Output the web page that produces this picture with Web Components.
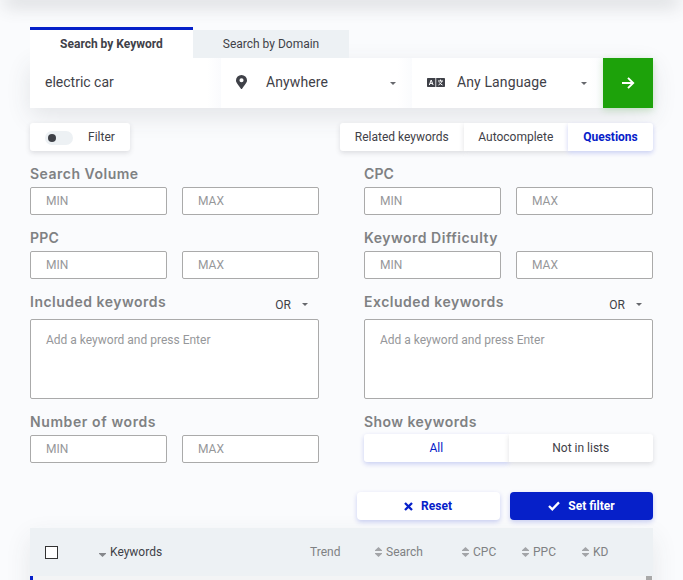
<!DOCTYPE html>
<html lang="en">
<head>
<meta charset="utf-8">
<title>Keyword search</title>
<style>
  :root {
    --blue: #0620c9;
    --green: #1da20a;
    --text: #3f4148;
    --muted: #7f8183;
    --placeholder: #96979a;
    --line: #aaa;
    --panel: #edf1f4;
    --page: #fafbfd;
    --label-font: Inter, "Open Sans", sans-serif;
    --soft-shadow: 0 2px 5px rgba(60, 64, 72, 0.16);
    --blue-shadow: 0 2px 5px rgba(6, 32, 201, 0.2);
  }
  html, body {
    margin: 0;
    height: 580px;
    overflow: hidden;
    background: var(--page);
  }
  body {
    font: 12px/14px Roboto, "Liberation Sans", sans-serif;
    color: var(--text);
  }
</style>
</head>
<body>
<keyword-page></keyword-page>

<script>
"use strict";

const ICONS = {
  pin: `<svg width="11" height="14" viewBox="0 0 384 512" preserveAspectRatio="none"><path fill="currentColor" d="M172 502C27 291 0 270 0 192a192 192 0 0 1 384 0c0 78-27 99-172 310a24 24 0 0 1-40 0zM192 264a72 72 0 1 0 0-144 72 72 0 0 0 0 144z"/></svg>`,
  language: `<svg width="18" height="9" viewBox="0 0 18 9"><path fill="currentColor" d="M.8 0h7.6v9H.8a.8.8 0 0 1-.8-.8V.8A.8.8 0 0 1 .8 0zM9.2 0h8a.8.8 0 0 1 .8.8v7.4a.8.8 0 0 1-.8.8h-8z"/><path d="M2.3 7 4.2 2l1.9 5M3 5.4h2.4M11 3h5M13.5 1.6V3M14.8 3.2c-.4 1.7-1.6 2.9-3.3 3.8M12.2 4.4c.7 1.2 1.9 2 3.3 2.6" fill="none" stroke="#fff" stroke-width="1"/></svg>`,
  arrow: `<svg width="14" height="14" viewBox="0 0 14 14"><path d="M1 7h11M7 1.8 12.2 7 7 12.2" fill="none" stroke="currentColor" stroke-width="1.9"/></svg>`,
  caret: `<svg width="6" height="3" viewBox="0 0 6 3"><path fill="currentColor" d="M0 0h6L3 3z"/></svg>`,
  cross: `<svg width="9" height="9" viewBox="0 0 9 9"><path d="m1 1 7 7M8 1 1 8" stroke="currentColor" stroke-width="2.3"/></svg>`,
  check: `<svg width="12" height="10" viewBox="0 0 12 10"><path d="m1 5 3.3 3.3L11 1.4" fill="none" stroke="currentColor" stroke-width="2.3"/></svg>`,
  sort: `<svg width="7" height="10" viewBox="0 0 7 10"><path fill="currentColor" d="M3.5 0 7 3.2V4H0v-.8zM0 6h7v.8L3.5 10 0 6.8z"/></svg>`,
  down: `<svg width="7" height="10" viewBox="0 0 7 10"><path fill="currentColor" d="M0 6h7v.8L3.5 10 0 6.8z"/></svg>`,
};

class BaseElement extends HTMLElement {
  render(css, html) {
    if (this.shadowRoot) return;
    const shadow = this.attachShadow({ mode: "open" });
    shadow.innerHTML = `<style>* { box-sizing: border-box; }${css}</style>${html}`;
  }
}

class UiIcon extends BaseElement {
  connectedCallback() {
    this.render(
      `:host { display: inline-flex; flex: none; } svg { display: block; }`,
      ICONS[this.getAttribute("name")]
    );
  }
}

class SearchTabs extends BaseElement {
  connectedCallback() {
    this.render(
      `
      :host { display: flex; align-items: flex-end; height: 31px; }
      button {
        height: 28px; border: 0; padding: 0; font: inherit; color: inherit;
        background: var(--panel); width: 156px;
      }
      button.active {
        width: 163px; height: 31px; font-weight: bold; background: #fff;
        border-top: 3px solid var(--blue);
      }
      `,
      `
      <button type="button" class="active">Search by Keyword</button>
      <button type="button">Search by Domain</button>
      `
    );
  }
}

class SearchCell extends BaseElement {
  connectedCallback() {
    const icon = this.getAttribute("icon");
    this.render(
      `
      :host {
        display: flex; align-items: center; height: 50px; padding: 0 16px 2px 15px;
        font-size: 14px; line-height: 20px; box-sizing: border-box;
        background: linear-gradient(90deg, #fff calc(100% - 14px), var(--page));
      }
      .icon { display: flex; width: var(--icon-width, 30px); }
      .value { flex: 1; }
      :host([icon]) .value { letter-spacing: 0.12px; }
      .caret { color: #66686d; margin-top: 3px; }
      `,
      `
      ${icon ? `<span class="icon"><ui-icon name="${icon}"></ui-icon></span>` : ""}
      <span class="value"><slot></slot></span>
      ${icon ? `<ui-icon class="caret" name="caret"></ui-icon>` : ""}
      `
    );
  }
}

class SearchBar extends BaseElement {
  connectedCallback() {
    this.render(
      `
      :host {
        display: grid; grid-template-columns: 191px 191px 191px 50px; height: 50px;
        box-shadow: 0 8px 24px rgba(60, 64, 72, 0.12);
      }
      button {
        display: flex; align-items: center; justify-content: center; border: 0;
        color: #fff; background: var(--green); box-shadow: 0 2px 7px rgba(29, 162, 10, 0.2);
      }
      `,
      `
      <search-cell>electric car</search-cell>
      <search-cell icon="pin">Anywhere</search-cell>
      <search-cell icon="language">Any Language</search-cell>
      <button type="button" aria-label="Search"><ui-icon name="arrow"></ui-icon></button>
      `
    );
  }
}

class FilterSwitch extends BaseElement {
  connectedCallback() {
    this.render(
      `
      :host {
        display: flex; align-items: center; gap: 15px; width: 100px; height: 28px;
        padding-left: 15px; box-sizing: border-box; background: #fff; border-radius: 3px;
        box-shadow: var(--soft-shadow);
      }
      .track {
        width: 28px; height: 14px; margin-top: 2px; padding: 3px; border-radius: 7px;
        background: var(--panel);
      }
      .knob { width: 8px; height: 8px; border-radius: 50%; background: var(--text); }
      `,
      `<div class="track"><div class="knob"></div></div><slot></slot>`
    );
  }
}

class SegmentGroup extends BaseElement {
  connectedCallback() {
    this.render(
      `
      :host { display: grid; grid-template-columns: var(--columns); height: 28px; }
      ::slotted(*) {
        display: flex; align-items: center; justify-content: center;
        background: #fff; box-shadow: var(--soft-shadow);
      }
      ::slotted(:first-child) { border-radius: 3px 0 0 3px; }
      ::slotted(:last-child) { border-radius: 0 3px 3px 0; }
      ::slotted(.active) { color: var(--blue); box-shadow: var(--blue-shadow); }
      `,
      `<slot></slot>`
    );
  }
}

class FilterField extends BaseElement {
  connectedCallback() {
    const spacing = this.getAttribute("spacing") || "0.5";
    this.render(
      `
      :host { display: block; }
      header { display: flex; justify-content: space-between; height: 26px; }
      .label {
        font: 600 14px/26px var(--label-font); letter-spacing: ${spacing}px; color: var(--muted);
      }
      `,
      `<header><span class="label">${this.getAttribute("label")}</span><slot name="action"></slot></header><slot></slot>`
    );
  }
}

class RangeInputs extends BaseElement {
  connectedCallback() {
    this.render(
      `
      :host { display: grid; grid-template-columns: 1fr 1fr; gap: 15px; }
      input {
        width: 100%; height: 28px; padding: 0 15px; border: 1px solid var(--line);
        border-radius: 2px; font: inherit; background: #fff; outline: 0;
      }
      input::placeholder { color: var(--placeholder); }
      `,
      `<input placeholder="MIN"><input placeholder="MAX">`
    );
  }
}

class ModeSelect extends BaseElement {
  connectedCallback() {
    this.render(
      `
      :host {
        display: flex; align-items: center; gap: 11px; height: 26px;
        padding: 5px 11px 0 0; box-sizing: border-box;
      }
      span { padding-top: 1px; }
      ui-icon { color: #66686d; }
      `,
      `<span>OR</span><ui-icon name="caret"></ui-icon>`
    );
  }
}

class KeywordBox extends BaseElement {
  connectedCallback() {
    this.render(
      `
      :host { display: block; margin-top: 4px; }
      textarea {
        display: block; width: 100%; height: 80px; padding: 13px 15px; resize: none;
        border: 1px solid var(--line); border-radius: 2px; font: inherit; background: #fff;
      }
      textarea::placeholder { color: var(--placeholder); }
      `,
      `<textarea placeholder="Add a keyword and press Enter"></textarea>`
    );
  }
}

class ActionButton extends BaseElement {
  connectedCallback() {
    this.render(
      `
      :host { display: block; width: 143px; height: 28px; }
      button {
        display: flex; align-items: center; justify-content: center; gap: 8px;
        width: 100%; height: 100%; padding: 0; border: 0; border-radius: 4px;
        font: inherit; font-weight: bold; color: var(--blue); background: #fff;
        box-shadow: var(--blue-shadow);
      }
      :host(:not([primary])) button { padding-right: 1px; }
      :host([primary]) button { color: #fff; background: var(--blue); }
      `,
      `<button type="button"><ui-icon name="${this.getAttribute("icon")}"></ui-icon><slot></slot></button>`
    );
  }
}

class KeywordTable extends BaseElement {
  connectedCallback() {
    this.render(
      `
      :host { display: block; box-shadow: 0 10px 24px rgba(60, 64, 72, 0.1); }
      .head {
        display: grid; grid-template-columns: 54px 211px 65px 87px 60px 60px 1fr;
        align-items: center; height: 48px; padding-left: 15px;
        background: var(--panel); color: var(--muted);
      }
      .head span { display: flex; align-items: center; gap: 4px; }
      .head ui-icon { color: #a3a5a8; }
      .head .sorted { color: var(--text); }
      .head .sorted ui-icon { color: #85878b; }
      .box { width: 13px; height: 13px; border: 1px solid #333; background: #fff; }
      .row {
        display: flex; justify-content: flex-end; height: 30px;
        border-left: 3px solid var(--blue); background: #f3f4f5;
      }
      .thumb { width: 6px; margin-right: 1px; background: #a9a9a9; }
      `,
      `
      <div class="head">
        <div class="box"></div>
        <span class="sorted"><ui-icon name="down"></ui-icon>Keywords</span>
        <span>Trend</span>
        <span><ui-icon name="sort"></ui-icon>Search</span>
        <span><ui-icon name="sort"></ui-icon>CPC</span>
        <span><ui-icon name="sort"></ui-icon>PPC</span>
        <span><ui-icon name="sort"></ui-icon>KD</span>
      </div>
      <div class="row"><div class="thumb"></div></div>
      `
    );
  }
}

class KeywordPage extends BaseElement {
  connectedCallback() {
    this.render(
      `
      :host { display: block; width: 683px; }
      .top { height: 0; margin: 0 10px; box-shadow: 0 0 18px 6px rgba(60, 64, 72, 0.2); }
      main { width: 623px; padding-top: 27px; margin: 0 auto; }
      .toolbar { display: flex; justify-content: space-between; margin-top: 15px; }
      .modes { --columns: 123.5px 104.5px 85px; }
      .modes .active { font-weight: bold; }
      .show { --columns: 1fr 1fr; margin-top: -1px; }
      .filters { display: grid; grid-template-columns: 1fr 1fr; gap: 10px 45px; margin-top: 10px; }
      .actions { display: flex; justify-content: flex-end; gap: 10px; margin: 29px 0 8px; }
      `,
      `
      <div class="top"></div>
      <main>
        <search-tabs></search-tabs>
        <search-bar></search-bar>
        <div class="toolbar">
          <filter-switch>Filter</filter-switch>
          <segment-group class="modes">
            <span>Related keywords</span>
            <span>Autocomplete</span>
            <span class="active">Questions</span>
          </segment-group>
        </div>
        <div class="filters">
          <filter-field label="Search Volume"><range-inputs></range-inputs></filter-field>
          <filter-field label="CPC" spacing="0.1"><range-inputs></range-inputs></filter-field>
          <filter-field label="PPC" spacing="0.2"><range-inputs></range-inputs></filter-field>
          <filter-field label="Keyword Difficulty"><range-inputs></range-inputs></filter-field>
          <filter-field label="Included keywords">
            <mode-select slot="action"></mode-select><keyword-box></keyword-box>
          </filter-field>
          <filter-field label="Excluded keywords">
            <mode-select slot="action"></mode-select><keyword-box></keyword-box>
          </filter-field>
          <filter-field label="Number of words" spacing="0.6"><range-inputs></range-inputs></filter-field>
          <filter-field label="Show keywords" spacing="0.45">
            <segment-group class="show">
              <span class="active">All</span>
              <span>Not in lists</span>
            </segment-group>
          </filter-field>
        </div>
        <div class="actions">
          <action-button icon="cross">Reset</action-button>
          <action-button icon="check" primary>Set filter</action-button>
        </div>
        <keyword-table></keyword-table>
      </main>
      `
    );
  }
}

customElements.define("ui-icon", UiIcon);
customElements.define("search-tabs", SearchTabs);
customElements.define("search-cell", SearchCell);
customElements.define("search-bar", SearchBar);
customElements.define("filter-switch", FilterSwitch);
customElements.define("segment-group", SegmentGroup);
customElements.define("filter-field", FilterField);
customElements.define("range-inputs", RangeInputs);
customElements.define("mode-select", ModeSelect);
customElements.define("keyword-box", KeywordBox);
customElements.define("action-button", ActionButton);
customElements.define("keyword-table", KeywordTable);
customElements.define("keyword-page", KeywordPage);
</script>
</body>
</html>
